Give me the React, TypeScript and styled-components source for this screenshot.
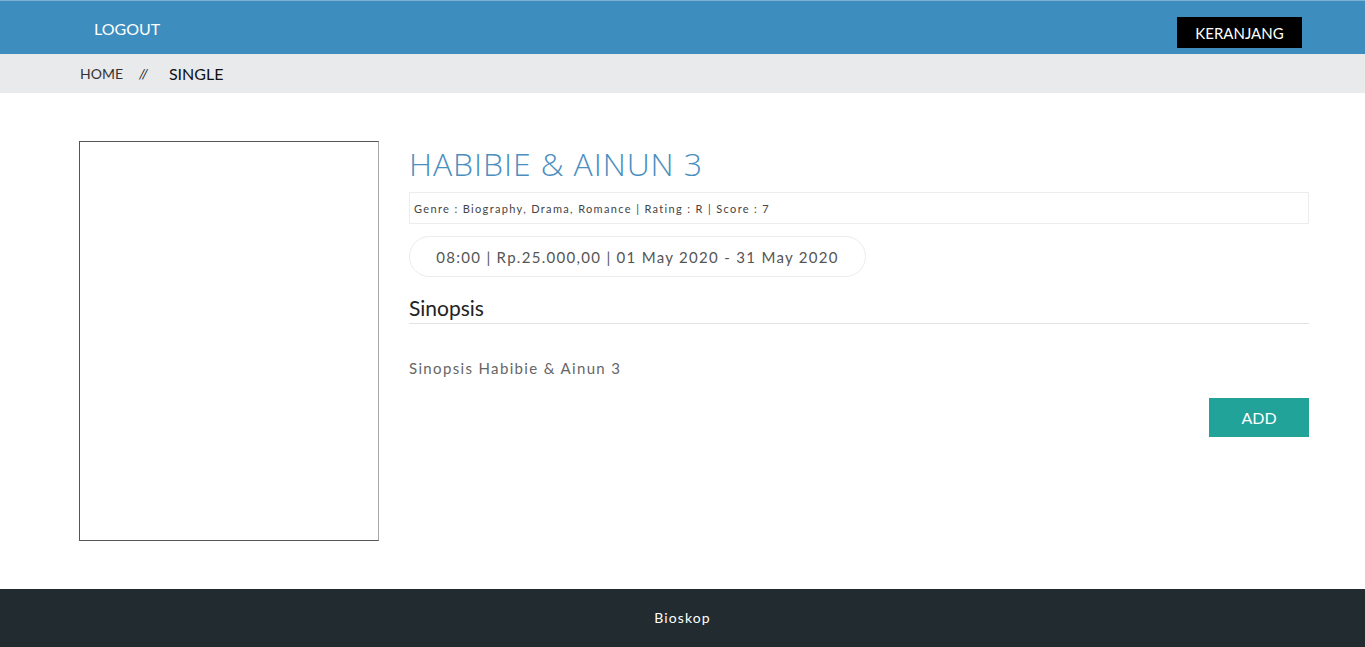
import React from "react";
import styled, { createGlobalStyle } from "styled-components";

const Global = createGlobalStyle`
  html, body { margin: 0; padding: 0; background: #fff; }
  body { font-family: Lato, "Open Sans", sans-serif; }
  * { box-sizing: border-box; }
`;

const Header = styled.header`
  height: 54px;
  background: #3d8dbe;
  border-top: 1px solid #7fb0d3;
  display: flex;
  align-items: center;
  justify-content: space-between;
  padding: 0 63px 0 94px;
`;

const NavLink = styled.a`
  color: #fff;
  font-size: 16px;
  text-decoration: none;
  margin-top: 1px;
`;

const CartButton = styled.button`
  background: #000;
  color: #fff;
  border: none;
  height: 31px;
  width: 125px;
  font-family: Lato, sans-serif;
  font-size: 15px;
  margin-top: 10px;
  padding: 0;
`;

const Breadcrumb = styled.nav`
  height: 39px;
  background: #e9eaec;
  display: flex;
  align-items: center;
  padding-left: 80px;
  font-size: 14px;
  color: #333;
`;

const Crumb = styled.span<{ $active?: boolean }>`
  color: ${(p) => (p.$active ? "#111" : "#333")};
  font-size: ${(p) => (p.$active ? "16px" : "14px")};
`;

const Sep = styled.span`
  font-style: italic;
  margin: 0 21px 0 16px;
  color: #222;
`;

const Main = styled.main`
  display: flex;
  gap: 30px;
  padding: 48px 56px 48px 79px;
  min-height: 496px;
`;

const Poster = styled.div`
  width: 300px;
  height: 400px;
  flex-shrink: 0;
  border: 1px solid #555;
  border-right-color: #a8a8a8;
`;

const Details = styled.section`
  flex: 1;
  display: flex;
  flex-direction: column;
`;

const Title = styled.h1`
  margin: 5px 0 0 0;
  font-family: "Open Sans", sans-serif;
  font-weight: 300;
  font-size: 32px;
  color: #4a8fc0;
  letter-spacing: 0.9px;
  line-height: 36px;
`;

const InfoBox = styled.div`
  margin-top: 10px;
  height: 32px;
  border: 1px solid #ececec;
  display: flex;
  align-items: center;
  padding-left: 4px;
  font-size: 11px;
  letter-spacing: 1.35px;
  color: #444;
`;

const SchedulePill = styled.div`
  margin-top: 12px;
  align-self: flex-start;
  height: 41px;
  width: 457px;
  border: 1px solid #ececec;
  border-radius: 21px;
  display: flex;
  align-items: center;
  justify-content: center;
  font-size: 15px;
  letter-spacing: 1.3px;
  color: #555;
`;

const SectionTitle = styled.h2`
  margin: 19px 0 0;
  font-weight: 400;
  font-size: 21px;
  color: #222;
  padding-bottom: 3px;
  border-bottom: 1px solid #e3e3e3;
  line-height: 24px;
`;

const Synopsis = styled.p`
  margin: 35px 0 0;
  font-size: 15px;
  letter-spacing: 1.35px;
  color: #666;
`;

const ActionRow = styled.div`
  display: flex;
  justify-content: flex-end;
  margin-top: 21px;
`;

const AddButton = styled.button`
  background: #21a39a;
  color: #fff;
  border: none;
  width: 100px;
  height: 39px;
  font-family: Lato, sans-serif;
  font-size: 16px;
  padding: 0;
`;

const Footer = styled.footer`
  height: 58px;
  background: #222b30;
  display: flex;
  align-items: center;
  justify-content: center;
  color: #fff;
  font-size: 14px;
  letter-spacing: 1.1px;
  padding-bottom: 2px;
`;

export default function App() {
  return (
    <>
      <Global />
      <Header>
        <NavLink href="#">LOGOUT</NavLink>
        <CartButton>KERANJANG</CartButton>
      </Header>
      <Breadcrumb>
        <Crumb>HOME</Crumb>
        <Sep>//</Sep>
        <Crumb $active>SINGLE</Crumb>
      </Breadcrumb>
      <Main>
        <Poster />
        <Details>
          <Title>HABIBIE &amp; AINUN 3</Title>
          <InfoBox>Genre : Biography, Drama, Romance | Rating : R | Score : 7</InfoBox>
          <SchedulePill>08:00 | Rp.25.000,00 | 01 May 2020 - 31 May 2020</SchedulePill>
          <SectionTitle>Sinopsis</SectionTitle>
          <Synopsis>Sinopsis Habibie &amp; Ainun 3</Synopsis>
          <ActionRow>
            <AddButton>ADD</AddButton>
          </ActionRow>
        </Details>
      </Main>
      <Footer>Bioskop</Footer>
    </>
  );
}
